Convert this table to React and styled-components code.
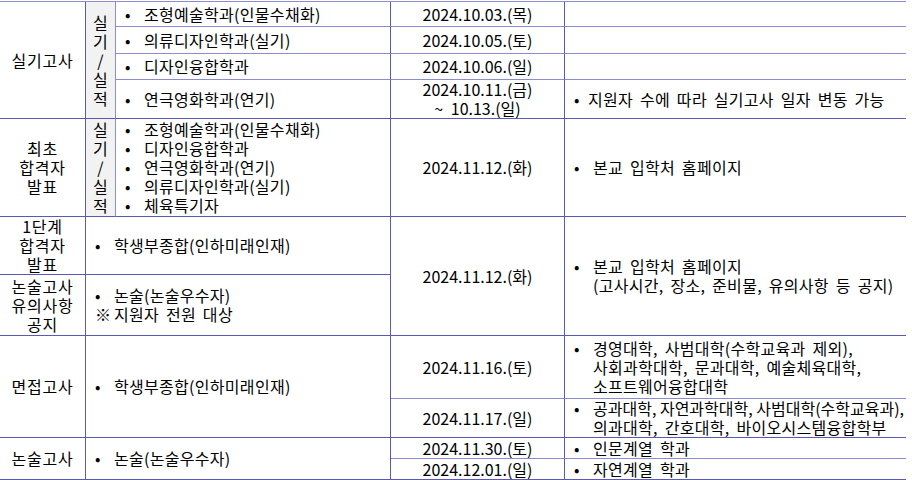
import React from 'react';
import styled, { createGlobalStyle } from 'styled-components';

const LINE = '#5a5ab4';
const SOFT = '#8c8cd2';

const Global = createGlobalStyle`
  html, body { margin: 0; padding: 0; background: #ffffff; }
  body { font-family: "Noto Sans CJK KR", "Noto Sans", sans-serif; }
`;

const Page = styled.div`
  padding-top: 1px;
  width: 906px;
`;

const Grid = styled.div`
  display: grid;
  grid-template-columns: 86px 30px 275px 174px 341px;
  grid-template-rows: 25px 27px 26px 39px 98px 58px 61px 63px 39px 21px 21px;
  border-top: 1px solid ${SOFT};
  font-size: 16px;
  line-height: 19px;
  color: #000000;
  letter-spacing: 0.3px;
  word-spacing: 3px;
`;

const Cell = styled.div`
  box-sizing: border-box;
  grid-column: ${(p) => p.$col};
  grid-row: ${(p) => p.$row};
  border-bottom: 1px solid ${(p) => (p.$soft ? SOFT : LINE)};
  border-right: 1px solid ${LINE};
  display: flex;
  flex-direction: column;
  justify-content: center;
  min-width: 0;
  white-space: nowrap;
`;

const HeadCell = styled(Cell)`
  align-items: center;
  text-align: center;
  word-spacing: 0;
  letter-spacing: 0.8px;
`;

const SubCell = styled(Cell)`
  align-items: center;
  text-align: center;
  background: #f2f2f2;
  border-right-color: ${SOFT};
`;

const ListCell = styled(Cell)`
  padding-left: 9px;
  align-items: flex-start;
`;

const DateCell = styled(Cell)`
  align-items: center;
  text-align: center;
  word-spacing: 4px;
  letter-spacing: 0;
`;

const NoteCell = styled(ListCell)`
  border-right: none;
`;

const Item = styled.div`
  display: flex;
  align-items: flex-start;
`;

const Mark = styled.span`
  flex: none;
  width: ${(p) => (p.$narrow ? '14px' : '19px')};
`;

const Text = styled.span`
  display: block;
`;

const Tight = styled.span`
  letter-spacing: 0;
  word-spacing: 0;
`;

function Bullet({ children, mark = '•', narrow }) {
  return (
    <Item>
      <Mark $narrow={narrow}>{mark}</Mark>
      <Text>{children}</Text>
    </Item>
  );
}

const Vertical = () => (
  <>
    실<br />기<br />/<br />실<br />적
  </>
);

export default function App() {
  return (
    <>
      <Global />
      <Page>
        <Grid>
          <HeadCell $col="1" $row="1 / span 4">실기고사</HeadCell>
          <SubCell $col="2" $row="1 / span 4"><div><Vertical /></div></SubCell>

          <ListCell $col="3" $row="1" $soft><Bullet>조형예술학과(인물수채화)</Bullet></ListCell>
          <DateCell $col="4" $row="1" $soft>2024.10.03.(목)</DateCell>
          <NoteCell $col="5" $row="1" $soft />

          <ListCell $col="3" $row="2" $soft><Bullet>의류디자인학과(실기)</Bullet></ListCell>
          <DateCell $col="4" $row="2" $soft>2024.10.05.(토)</DateCell>
          <NoteCell $col="5" $row="2" $soft />

          <ListCell $col="3" $row="3" $soft><Bullet>디자인융합학과</Bullet></ListCell>
          <DateCell $col="4" $row="3" $soft>2024.10.06.(일)</DateCell>
          <NoteCell $col="5" $row="3" $soft />

          <ListCell $col="3" $row="4"><Bullet>연극영화학과(연기)</Bullet></ListCell>
          <DateCell $col="4" $row="4">
            <div>2024.10.11.(금)</div>
            <div>~ 10.13.(일)</div>
          </DateCell>
          <NoteCell $col="5" $row="4">
            <Bullet narrow>지원자 수에 따라 실기고사 일자 변동 가능</Bullet>
          </NoteCell>

          <HeadCell $col="1" $row="5">최초<br />합격자<br />발표</HeadCell>
          <SubCell $col="2" $row="5"><div><Vertical /></div></SubCell>
          <ListCell $col="3" $row="5">
            <Bullet>조형예술학과(인물수채화)</Bullet>
            <Bullet>디자인융합학과</Bullet>
            <Bullet>연극영화학과(연기)</Bullet>
            <Bullet>의류디자인학과(실기)</Bullet>
            <Bullet>체육특기자</Bullet>
          </ListCell>
          <DateCell $col="4" $row="5">2024.11.12.(화)</DateCell>
          <NoteCell $col="5" $row="5"><Bullet>본교 입학처 홈페이지</Bullet></NoteCell>

          <HeadCell $col="1" $row="6">1단계<br />합격자<br />발표</HeadCell>
          <ListCell $col="2 / span 2" $row="6"><Bullet>학생부종합(인하미래인재)</Bullet></ListCell>
          <DateCell $col="4" $row="6 / span 2">2024.11.12.(화)</DateCell>
          <NoteCell $col="5" $row="6 / span 2">
            <Bullet>본교 입학처 홈페이지<br />(고사시간, 장소, 준비물, 유의사항 등 공지)</Bullet>
          </NoteCell>

          <HeadCell $col="1" $row="7">논술고사<br />유의사항<br />공지</HeadCell>
          <ListCell $col="2 / span 2" $row="7">
            <Bullet>논술(논술우수자)</Bullet>
            <Bullet mark="※">지원자 전원 대상</Bullet>
          </ListCell>

          <HeadCell $col="1" $row="8 / span 2">면접고사</HeadCell>
          <ListCell $col="2 / span 2" $row="8 / span 2"><Bullet>학생부종합(인하미래인재)</Bullet></ListCell>
          <DateCell $col="4" $row="8" $soft>2024.11.16.(토)</DateCell>
          <NoteCell $col="5" $row="8" $soft>
            <Bullet>경영대학, 사범대학(수학교육과 제외),<br />사회과학대학, 문과대학, 예술체육대학,<br />소프트웨어융합대학</Bullet>
          </NoteCell>
          <DateCell $col="4" $row="9">2024.11.17.(일)</DateCell>
          <NoteCell $col="5" $row="9">
            <Bullet><Tight>공과대학, 자연과학대학, 사범대학(수학교육과),</Tight><br />의과대학, 간호대학, 바이오시스템융합학부</Bullet>
          </NoteCell>

          <HeadCell $col="1" $row="10 / span 2">논술고사</HeadCell>
          <ListCell $col="2 / span 2" $row="10 / span 2"><Bullet>논술(논술우수자)</Bullet></ListCell>
          <DateCell $col="4" $row="10" $soft>2024.11.30.(토)</DateCell>
          <NoteCell $col="5" $row="10" $soft><Bullet>인문계열 학과</Bullet></NoteCell>
          <DateCell $col="4" $row="11">2024.12.01.(일)</DateCell>
          <NoteCell $col="5" $row="11"><Bullet>자연계열 학과</Bullet></NoteCell>
        </Grid>
      </Page>
    </>
  );
}
